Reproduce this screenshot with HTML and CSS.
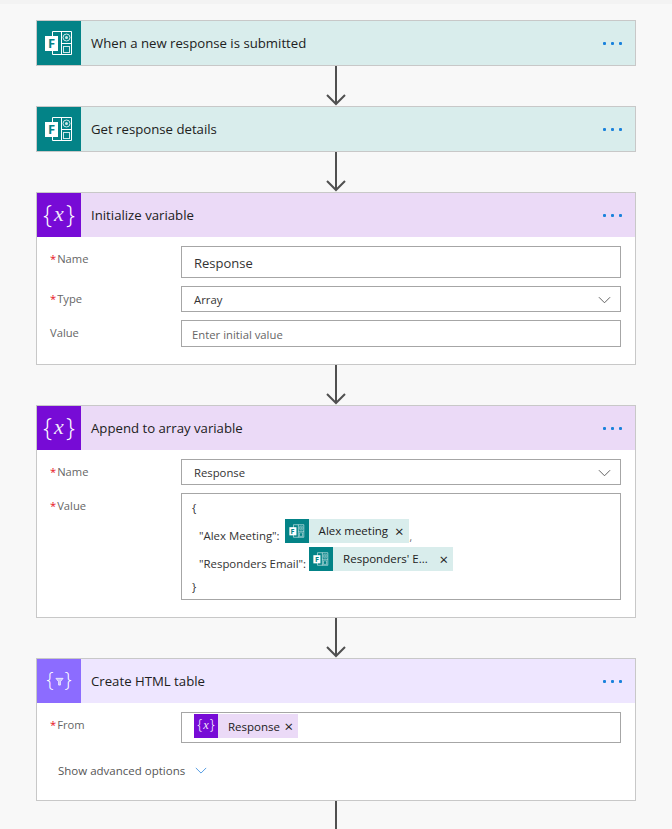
FILE: index.html
```html
<!DOCTYPE html>
<html lang="en">
<head>
    <meta charset="UTF-8">
    <title>Flow</title>
    <link rel="stylesheet" href="styles.css">
</head>
<body>
    <svg class="defs" width="0" height="0">
        <symbol id="forms" viewBox="0 0 44 44">
            <path d="M15.5 10.5h19v23h-19zM24.5 10.5v23M24.5 22.5h10" fill="none" stroke="#fff" />
            <circle cx="29.5" cy="16.5" r="3.5" fill="none" stroke="#cfe8e8" />
            <circle cx="29.5" cy="16.5" r="1.5" fill="#cfe8e8" />
            <rect x="26.5" y="25.5" width="6" height="6" fill="none" stroke="#cfe8e8" />
            <rect x="8" y="15" width="13" height="15" fill="#fff" />
        </symbol>
        <symbol id="funnel" viewBox="0 0 10 10">
            <path d="M1 1.5h8L6 5.2V9H4V5.2z" fill="#fff" fill-opacity="0.55" stroke="#fff" stroke-width="0.8" />
        </symbol>
        <symbol id="chevron" viewBox="0 0 14 8">
            <path d="M1 1l6 6 6-6" fill="none" stroke="currentColor" />
        </symbol>
        <symbol id="arrow" viewBox="0 0 20 40">
            <path d="M10 0v38M1 29l9 9 9-9" fill="none" stroke="#505050" stroke-width="2" />
        </symbol>
    </svg>

    <main class="flow">
        <section class="card forms">
            <header class="card-head">
                <div class="card-icon forms-icon"><svg><use href="#forms" /></svg><b>F</b></div>
                <h2>When a new response is submitted</h2>
                <div class="dots"><i></i><i></i><i></i></div>
            </header>
        </section>
        <svg class="arrow"><use href="#arrow" /></svg>

        <section class="card forms">
            <header class="card-head">
                <div class="card-icon forms-icon"><svg><use href="#forms" /></svg><b>F</b></div>
                <h2>Get response details</h2>
                <div class="dots"><i></i><i></i><i></i></div>
            </header>
        </section>
        <svg class="arrow"><use href="#arrow" /></svg>

        <section class="card variable">
            <header class="card-head">
                <div class="card-icon var-icon">{<i>x</i>}</div>
                <h2>Initialize variable</h2>
                <div class="dots"><i></i><i></i><i></i></div>
            </header>
            <div class="card-body">
                <div class="row">
                    <label><span class="req">*</span>Name</label>
                    <div class="field tall">Response</div>
                </div>
                <div class="row">
                    <label><span class="req">*</span>Type</label>
                    <div class="field small">Array<svg class="chev"><use href="#chevron" /></svg></div>
                </div>
                <div class="row">
                    <label>Value</label>
                    <div class="field small holder">Enter initial value</div>
                </div>
            </div>
        </section>
        <svg class="arrow"><use href="#arrow" /></svg>

        <section class="card variable">
            <header class="card-head">
                <div class="card-icon var-icon">{<i>x</i>}</div>
                <h2>Append to array variable</h2>
                <div class="dots"><i></i><i></i><i></i></div>
            </header>
            <div class="card-body">
                <div class="row">
                    <label><span class="req">*</span>Name</label>
                    <div class="field small">Response<svg class="chev"><use href="#chevron" /></svg></div>
                </div>
                <div class="row">
                    <label><span class="req">*</span>Value</label>
                    <div class="field code">
                        <div class="code-line first">{</div>
                        <div class="code-line indent">
                            <span class="code-key">"Alex Meeting":</span>
                            <span class="token forms-token alex">
                                <div class="token-icon forms-icon"><svg><use href="#forms" /></svg><b>F</b></div>
                                <span class="token-name">Alex meeting</span>
                                <span class="token-x">×</span>
                            </span>
                            <span class="comma">,</span>
                        </div>
                        <div class="code-line indent">
                            <span class="code-key">"Responders Email":</span>
                            <span class="token forms-token responders">
                                <div class="token-icon forms-icon"><svg><use href="#forms" /></svg><b>F</b></div>
                                <span class="token-name">Responders' E...</span>
                                <span class="token-x">×</span>
                            </span>
                        </div>
                        <div class="code-line last">}</div>
                    </div>
                </div>
            </div>
        </section>
        <svg class="arrow"><use href="#arrow" /></svg>

        <section class="card table">
            <header class="card-head">
                <div class="card-icon filter-icon">{<svg><use href="#funnel" /></svg>}</div>
                <h2>Create HTML table</h2>
                <div class="dots"><i></i><i></i><i></i></div>
            </header>
            <div class="card-body">
                <div class="row">
                    <label><span class="req">*</span>From</label>
                    <div class="field from">
                        <span class="token var-token">
                            <div class="token-icon var-icon">{<i>x</i>}</div>
                            <span class="token-name">Response</span>
                            <span class="token-x">×</span>
                        </span>
                    </div>
                </div>
                <div class="advanced">Show advanced options<svg class="adv-chev"><use href="#chevron" /></svg></div>
            </div>
        </section>
        <div class="tail"></div>
    </main>
</body>
</html>
```

FILE: styles.css
```css
* {
    margin: 0;
    padding: 0;
    box-sizing: border-box;
}

html, body {
    height: 829px;
    overflow: hidden;
}

body {
    font-family: "Open Sans", "Noto Sans", sans-serif;
    font-size: 12px;
    color: #333;
    background: #f8f8f8;
    border-top: 4px solid #f3f3f3;
}

.defs {
    display: block;
    height: 0;
}

.flow {
    width: 600px;
    margin-left: 36px;
    padding-top: 16px;
    display: flex;
    flex-direction: column;
    align-items: center;
}

.card {
    width: 100%;
    background: #fff;
    border: 1px solid #c8c8c8;
}

.arrow {
    width: 20px;
    height: 40px;
    display: block;
}

.tail {
    width: 2px;
    height: 40px;
    background: #505050;
}

/* header */
.card-head {
    height: 44px;
    display: flex;
    align-items: center;
}

.card-icon {
    width: 44px;
    height: 44px;
    flex: none;
    font-size: 25px;
}

.card-head h2 {
    flex: 1;
    margin-left: 10px;
    font-size: 13.2px;
    font-weight: 400;
    color: #212121;
}

.forms .card-head { background: #d9edec; }
.variable .card-head { background: #ebdaf7; }
.table .card-head { background: #eee6ff; }

.dots {
    display: flex;
    gap: 5px;
    margin-right: 13px;
}

.dots i {
    width: 3px;
    height: 3px;
    border-radius: 1px;
    background: #1a82dc;
}

/* service icons */
.forms-icon {
    position: relative;
    background: #038387;
}

.forms-icon svg {
    display: block;
    width: 100%;
    height: 100%;
}

.forms-icon b {
    position: absolute;
    left: 18%;
    top: 34%;
    width: 30%;
    height: 34%;
    display: flex;
    align-items: center;
    justify-content: center;
    font-size: 0.52em;
    line-height: 1;
    color: #038387;
}

.var-icon {
    display: flex;
    align-items: center;
    justify-content: center;
    gap: 0.08em;
    background: #770bd6;
    color: #fff;
    font-weight: 300;
    line-height: 1;
    padding-bottom: 0.12em;
}

.var-icon i {
    font-family: "Liberation Serif", serif;
    font-size: 0.88em;
    font-weight: 400;
    opacity: 0.9;
}

.filter-icon {
    display: flex;
    align-items: center;
    justify-content: center;
    gap: 1px;
    background: #8c6cff;
    color: #fff;
    font-size: 20px;
    font-weight: 300;
    line-height: 1;
    padding-bottom: 2px;
}

.filter-icon svg {
    width: 9px;
    height: 9px;
    margin-top: 3px;
}

/* fields */
.card-body {
    padding: 9px 14px 17px 13px;
    display: flex;
    flex-direction: column;
    gap: 8px;
}

.row {
    display: grid;
    grid-template-columns: 131px 440px;
}

.row label {
    font-size: 11.2px;
    line-height: 16px;
    color: #666;
    padding-top: 5px;
}

.req {
    color: #e81123;
    margin-right: 1px;
}

.field {
    border: 1px solid #a6a6a6;
    background: #fff;
    display: flex;
    align-items: center;
    padding-left: 12px;
    color: #333;
}

.field.tall {
    height: 32px;
    padding-top: 2px;
    font-size: 13px;
}

.field.small {
    height: 26px;
    padding-top: 1px;
    font-size: 11.3px;
    justify-content: space-between;
    padding-right: 9px;
}

.field.small.holder {
    height: 27px;
    padding-left: 10px;
    color: #666;
}

.chev {
    width: 13px;
    height: 8px;
    color: #555;
}

.field.code {
    display: block;
    height: 107px;
    padding: 6px 10px 0;
    font-size: 11.4px;
}

.code-line {
    display: flex;
    align-items: flex-end;
    height: 19px;
    line-height: 16px;
}

.code-line.first {
    align-items: flex-start;
}

.code-line.indent {
    height: 24px;
    padding-left: 7px;
    margin-bottom: 4px;
    gap: 5px;
}

.code-line.last {
    height: 24px;
    align-items: center;
}

.code-key {
    position: relative;
    top: 1px;
}

.comma {
    margin-left: -4px;
    font-size: 10px;
    line-height: 12px;
    color: #666;
}

/* tokens */
.token {
    display: inline-flex;
    align-items: center;
    height: 24px;
    font-size: 11.5px;
    color: #212121;
}

.forms-token { background: #d9edec; }
.var-token { background: #ebdaf7; }

.token-icon {
    width: 24px;
    height: 24px;
    flex: none;
    font-size: 14px;
}

.token-name {
    margin-left: 10px;
}

.token-x {
    font-size: 15px;
    line-height: 1;
    margin-left: auto;
    margin-right: 5px;
}

.alex { width: 124px; }
.responders { width: 144px; margin-left: -2px; }
.var-token { width: 104px; }

.field.from {
    height: 31px;
    align-items: flex-start;
    padding-top: 1px;
}

.advanced {
    display: flex;
    align-items: center;
    gap: 10px;
    height: 24px;
    margin: 7px 0 1px 8px;
    font-size: 11.5px;
    color: #555;
}

.adv-chev {
    width: 12px;
    height: 7px;
    color: #3b8ee0;
}
```
